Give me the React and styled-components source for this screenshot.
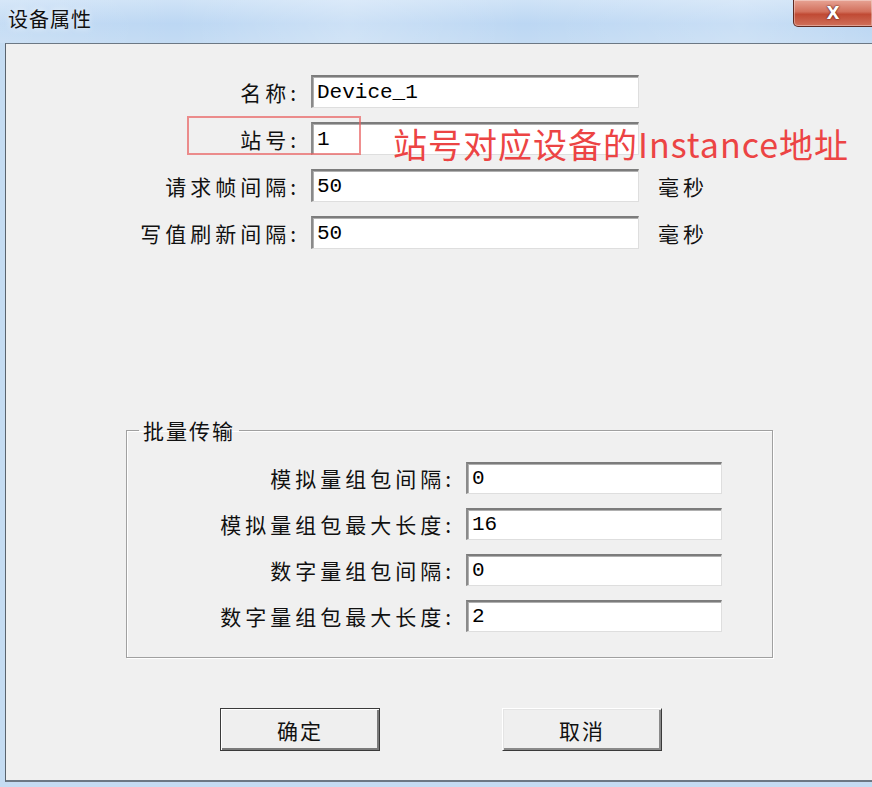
import React from 'react';
import styled, { createGlobalStyle } from 'styled-components';

const GlobalStyle = createGlobalStyle`
  html, body {
    margin: 0;
    padding: 0;
    background: #c5dcf2;
  }
  body {
    font-family: "Noto Sans CJK SC", "Liberation Sans", sans-serif;
  }
`;

const Window = styled.div`
  width: 872px;
  height: 787px;
  display: flex;
  flex-direction: column;
  overflow: hidden;
  background: #c5dcf2;
`;

const TitleBar = styled.div`
  height: 43px;
  flex: none;
  display: flex;
  justify-content: space-between;
  align-items: flex-start;
  background:
    linear-gradient(90deg, rgba(255,255,255,0.15) 0%, rgba(255,255,255,0) 20%, rgba(255,255,255,0.25) 40%, rgba(255,255,255,0) 60%, rgba(255,255,255,0.2) 85%, rgba(255,255,255,0) 100%),
    linear-gradient(180deg, #cfe3f7 0%, #bcd7f3 55%, #c3dbf3 100%);
`;

const Title = styled.div`
  padding: 6px 0 0 8px;
  font-size: 20px;
  line-height: 26px;
  color: #111;
  letter-spacing: 1px;
  text-shadow: 0 0 6px rgba(255,255,255,0.9);
`;

const CloseButton = styled.div`
  width: 80px;
  height: 27px;
  margin-right: -1px;
  box-sizing: border-box;
  border: 1px solid #5e2a22;
  border-top: none;
  border-radius: 0 0 0 5px;
  background: linear-gradient(180deg, #e7a394 0%, #d2705c 45%, #c04a34 55%, #d0705a 100%);
  box-shadow: inset 0 0 0 1px rgba(255,255,255,0.35);
  display: flex;
  align-items: center;
  justify-content: center;
  color: #fff;
  font-family: "DejaVu Sans", sans-serif;
  font-weight: bold;
  font-size: 17px;
  text-shadow: 0 0 2px #5a1a10, 0 0 1px #5a1a10;
`;

const Frame = styled.div`
  flex: 1;
  display: flex;
  padding: 0 0 5px 5px;
`;

const Client = styled.div`
  flex: 1;
  position: relative;
  background: #f0f0f0;
  border-top: 1px solid #6c7884;
  border-left: 1px solid #5a646e;
  border-bottom: 2px solid #6c7884;
  padding-top: 31px;
  font-size: 21px;
  color: #111;
`;

const FormGrid = styled.div`
  display: grid;
  grid-template-columns: ${p => p.$label}px ${p => p.$input}px auto;
  column-gap: 14px;
  row-gap: 14px;
  align-items: center;
`;

const Label = styled.div`
  text-align: right;
  letter-spacing: 4px;
  margin-right: -3px;
  white-space: nowrap;
  line-height: 24px;
`;

const Field = styled.div`
  height: ${p => p.$h}px;
  box-sizing: border-box;
  background: #fff;
  border-top: 2px solid #7c7c7c;
  border-left: 2px solid #8a8a8a;
  border-right: 1px solid #dedede;
  border-bottom: 1px solid #dedede;
  box-shadow: inset 1px 1px 0 #b0b0b0;
  padding-left: 4px;
  display: flex;
  align-items: center;
  font-family: "Liberation Mono", "DejaVu Sans Mono", monospace;
  font-size: 21px;
  color: #000;
`;

const Unit = styled.div`
  padding-left: 5px;
  letter-spacing: 4px;
`;

const Group = styled.fieldset`
  margin: 168px 0 0 120px;
  width: 647px;
  box-sizing: border-box;
  padding: 0 0 25px 0;
  border: 1px solid #a0a0a0;
  box-shadow: inset 1px 1px 0 #fff, 1px 1px 0 #fff;
`;

const Legend = styled.legend`
  margin-left: 12px;
  padding: 0 4px;
  font-size: 21px;
  line-height: 26px;
  letter-spacing: 2px;
`;

const GroupGrid = styled(FormGrid)`
  margin-top: 19px;
`;

const ButtonRow = styled.div`
  display: flex;
  gap: 122px;
  padding-left: 214px;
  margin-top: 50px;
`;

const Button = styled.button`
  width: 160px;
  height: 43px;
  box-sizing: border-box;
  background: #efefef;
  font-family: "Noto Sans CJK SC", sans-serif;
  font-size: 21px;
  letter-spacing: 2px;
  color: #111;
  border: 1px solid;
  border-color: ${p => (p.$default ? '#3a3a3a' : '#fff #3a3a3a #3a3a3a #fff')};
  box-shadow: ${p =>
    p.$default
      ? 'inset 1px 1px 0 #fff, inset -2px -2px 0 #7a7a7a'
      : 'inset 1px 1px 0 #e4e4e4, inset -2px -2px 0 #8a8a8a'};
  padding: 0;
`;

const NoteBox = styled.div`
  position: absolute;
  left: 181px;
  top: 72px;
  width: 174px;
  height: 39px;
  box-sizing: border-box;
  border: 2px solid rgba(232, 96, 96, 0.7);
  pointer-events: none;
`;

const NoteText = styled.div`
  position: absolute;
  left: 387px;
  top: 80px;
  font-family: "Noto Sans CJK SC", sans-serif;
  font-size: 34px;
  line-height: 40px;
  color: #ec4444;
  white-space: nowrap;
  letter-spacing: 1px;
`;

const mainRows = [
  { label: '名称:', value: 'Device_1' },
  { label: '站号:', value: '1' },
  { label: '请求帧间隔:', value: '50', unit: '毫秒' },
  { label: '写值刷新间隔:', value: '50', unit: '毫秒' },
];

const batchRows = [
  { label: '模拟量组包间隔:', value: '0' },
  { label: '模拟量组包最大长度:', value: '16' },
  { label: '数字量组包间隔:', value: '0' },
  { label: '数字量组包最大长度:', value: '2' },
];

export default function App() {
  return (
    <Window>
      <GlobalStyle />
      <TitleBar>
        <Title>设备属性</Title>
        <CloseButton>X</CloseButton>
      </TitleBar>
      <Frame>
        <Client>
          <FormGrid $label={291} $input={328}>
            {mainRows.map(r => (
              <React.Fragment key={r.label}>
                <Label>{r.label}</Label>
                <Field $h={33}>{r.value}</Field>
                <Unit>{r.unit || ''}</Unit>
              </React.Fragment>
            ))}
          </FormGrid>

          <Group>
            <Legend>批量传输</Legend>
            <GroupGrid $label={325} $input={256}>
              {batchRows.map(r => (
                <React.Fragment key={r.label}>
                  <Label>{r.label}</Label>
                  <Field $h={32}>{r.value}</Field>
                  <span />
                </React.Fragment>
              ))}
            </GroupGrid>
          </Group>

          <ButtonRow>
            <Button $default>确定</Button>
            <Button>取消</Button>
          </ButtonRow>

          <NoteBox />
          <NoteText>站号对应设备的Instance地址</NoteText>
        </Client>
      </Frame>
    </Window>
  );
}
